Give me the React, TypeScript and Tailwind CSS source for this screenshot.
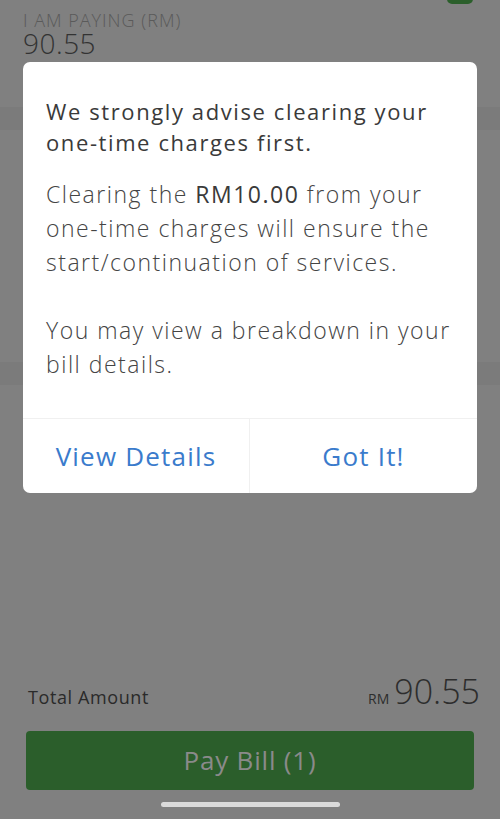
export default function App() {
  return (
    <div
      className="relative h-[819px] w-[500px] overflow-hidden bg-[#808080]"
      style={{ fontFamily: "'Open Sans', Lato, sans-serif" }}
    >
      {/* page behind the dim overlay */}
      <div className="flex h-full flex-col">
        <div className="relative h-[107px] px-[23px] pt-[10px]">
          <div className="absolute right-[27px] top-[-6px] h-[10px] w-[26px] rounded-[5px] bg-[#2b5f2b]" />
          <p className="text-[18px] font-light leading-[20px] tracking-[1px] text-[#5a5a5a]">I AM PAYING (RM)</p>
          <p className="text-[28px] font-light leading-[26px] tracking-[0.5px] text-[#333]">90.55</p>
        </div>
        <div className="h-[23px] bg-[#7b7b7b]" />
        <div className="h-[232px]" />
        <div className="h-[23px] bg-[#7b7b7b]" />
        <div className="flex-1" />
        <div className="flex items-end justify-between pb-[22px] pl-[28px] pr-[20px]">
          <span className="text-[18px] leading-[24px] tracking-[0.6px] text-[#2a2a2a]">Total Amount</span>
          <span className="flex items-baseline gap-[5px] text-[#2d2d2d]">
            <span className="text-[14px]">RM</span>
            <span className="text-[34px] font-light leading-[36px]">90.55</span>
          </span>
        </div>
        <div className="px-[26px]">
          <div className="flex h-[59px] items-center justify-center rounded-[4px] bg-[#2b5e2b] text-[26px] tracking-[0.8px] text-[#8a8a8a]">
            Pay Bill (1)
          </div>
        </div>
        <div className="flex h-[29px] items-center justify-center">
          <div className="h-[5px] w-[179px] rounded-full bg-[#dadada]" />
        </div>
      </div>

      {/* dialog */}
      <div className="absolute left-[23px] top-[62px] w-[454px] overflow-hidden rounded-[7px] bg-white">
        <div className="px-[23px] pb-[37px] pt-[34px]">
          <h2 className="whitespace-nowrap text-[22px] font-medium leading-[31px] tracking-[1.6px] text-[#3a3a3a]">
            We strongly advise clearing your
            <br />
            one-time charges first.
          </h2>
          <p className="mt-[19px] whitespace-nowrap text-[23px] font-light leading-[34px] tracking-[1.5px] text-[#444]">
            Clearing the <span className="font-medium text-[#3a3a3a]">RM10.00</span> from your
            <br />
            one-time charges will ensure the
            <br />
            start/continuation of services.
          </p>
          <p className="mt-[34px] whitespace-nowrap text-[23px] font-light leading-[34px] tracking-[1.5px] text-[#444]">
            You may view a breakdown in your
            <br />
            bill details.
          </p>
        </div>
        <div className="grid h-[75px] grid-cols-2 border-t border-[#f0f0f0]">
          <button className="border-r border-[#f0f0f0] text-[26px] tracking-[1.2px] text-[#3a7bcc]">View Details</button>
          <button className="text-[26px] tracking-[1.2px] text-[#3a7bcc]">Got It!</button>
        </div>
      </div>
    </div>
  );
}
